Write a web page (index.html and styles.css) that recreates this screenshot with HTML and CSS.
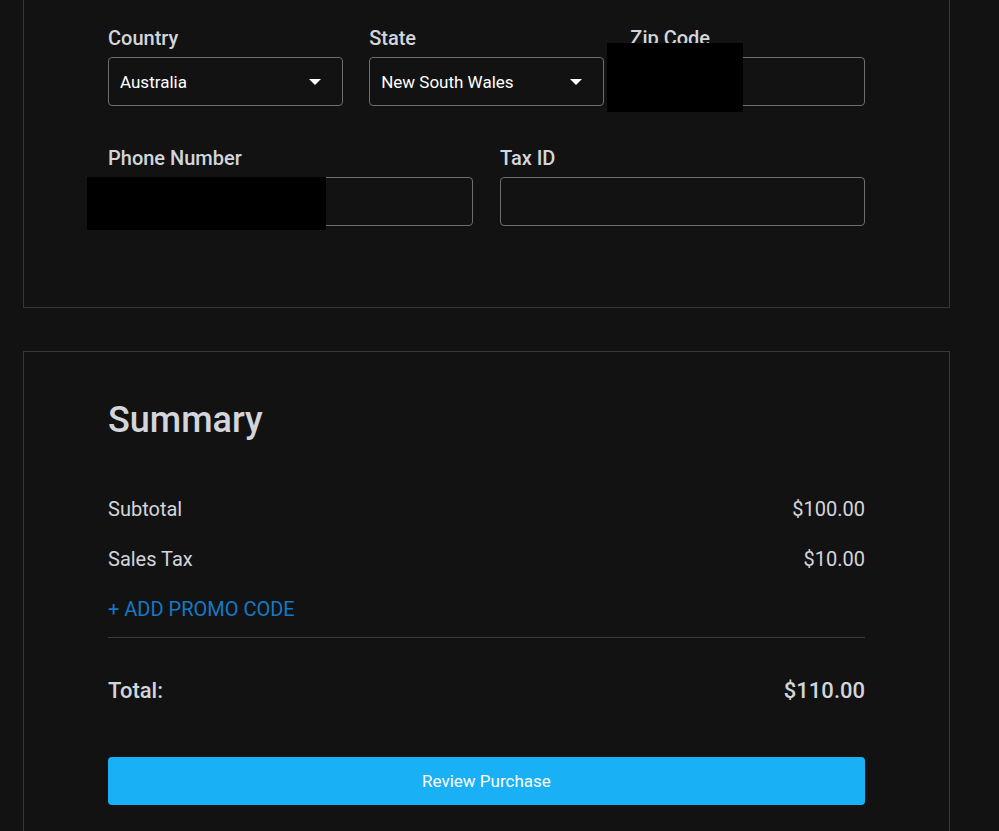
FILE: index.html
```html
<!DOCTYPE html>
<html lang="en">
<head>
    <meta charset="UTF-8">
    <meta name="viewport" content="width=device-width, initial-scale=1.0">
    <title>Checkout</title>
    <link rel="stylesheet" href="styles.css">
</head>
<body>
    <section class="card card-address">
        <div class="row row-three">
            <div class="field">
                <label>Country</label>
                <div class="select">
                    <span>Australia</span>
                    <svg class="arrow" width="12" height="6" viewBox="0 0 12 6"><path d="M0 0h12L6 6z" fill="#fff"/></svg>
                </div>
            </div>
            <div class="field">
                <label>State</label>
                <div class="select">
                    <span>New South Wales</span>
                    <svg class="arrow" width="12" height="6" viewBox="0 0 12 6"><path d="M0 0h12L6 6z" fill="#fff"/></svg>
                </div>
            </div>
            <div class="field">
                <label>Zip Code</label>
                <div class="input"></div>
                <div class="redact redact-zip"></div>
            </div>
        </div>
        <div class="row row-two">
            <div class="field">
                <label>Phone Number</label>
                <div class="input"></div>
                <div class="redact redact-phone"></div>
            </div>
            <div class="field">
                <label>Tax ID</label>
                <div class="input"></div>
            </div>
        </div>
    </section>

    <section class="card card-summary">
        <h2>Summary</h2>
        <div class="line">
            <span>Subtotal</span>
            <span>$100.00</span>
        </div>
        <div class="line">
            <span>Sales Tax</span>
            <span>$10.00</span>
        </div>
        <div class="line">
            <a class="promo" href="#">+ ADD PROMO CODE</a>
        </div>
        <hr class="divider">
        <div class="line total">
            <span>Total:</span>
            <span>$110.00</span>
        </div>
        <button type="button">Review Purchase</button>
    </section>
</body>
</html>
```

FILE: styles.css
```css
body {
    font-family: Roboto, "Liberation Sans", Arial, sans-serif;
    margin: 0;
    padding: 0;
    background-color: #121212;
    color: #d2d6db;
}
.card {
    width: 757px;
    margin-left: 23px;
    padding: 0 84px;
    border: 1px solid #383838;
}
.card-address {
    margin-top: -20px;
    padding-top: 45px;
    padding-bottom: 81px;
}
.row {
    display: grid;
    column-gap: 26.5px;
}
.row-three {
    grid-template-columns: repeat(3, 1fr);
}
.row-two {
    grid-template-columns: repeat(2, 1fr);
    column-gap: 27px;
    margin-top: 40px;
}
.field {
    position: relative;
}
label {
    display: block;
    font-size: 20px;
    font-weight: 500;
    line-height: 24px;
    margin-bottom: 7px;
}
.select, .input {
    box-sizing: border-box;
    height: 49px;
    border: 1px solid #6e6e6e;
    border-radius: 4px;
}
.select {
    display: flex;
    align-items: center;
    justify-content: space-between;
    padding: 0 21px 0 11px;
    font-size: 17px;
    color: #fff;
}
.arrow {
    display: block;
}
.redact {
    position: absolute;
    background-color: #000;
}
.redact-zip {
    left: -23px;
    top: 17px;
    width: 136px;
    height: 69px;
}
.redact-phone {
    left: -21px;
    top: 31px;
    width: 239px;
    height: 53px;
}
.card-summary {
    margin-top: 43px;
    padding-top: 47px;
    padding-bottom: 40px;
}
h2 {
    margin: 0 0 43px 0;
    font-size: 36px;
    font-weight: 500;
    line-height: 42px;
}
.line {
    display: flex;
    justify-content: space-between;
    align-items: center;
    height: 50px;
    font-size: 20px;
}
.promo {
    color: #1479c4;
    text-decoration: none;
}
.divider {
    margin: 3px 0 27px 0;
    border: none;
    border-top: 1px solid #3a3a3a;
}
.total {
    font-size: 22px;
    font-weight: 500;
}
button {
    display: block;
    width: 100%;
    height: 48px;
    margin-top: 42px;
    background-color: #1ab0f5;
    color: #fff;
    border: none;
    border-radius: 4px;
    font-family: inherit;
    font-size: 17px;
    cursor: pointer;
}
```
